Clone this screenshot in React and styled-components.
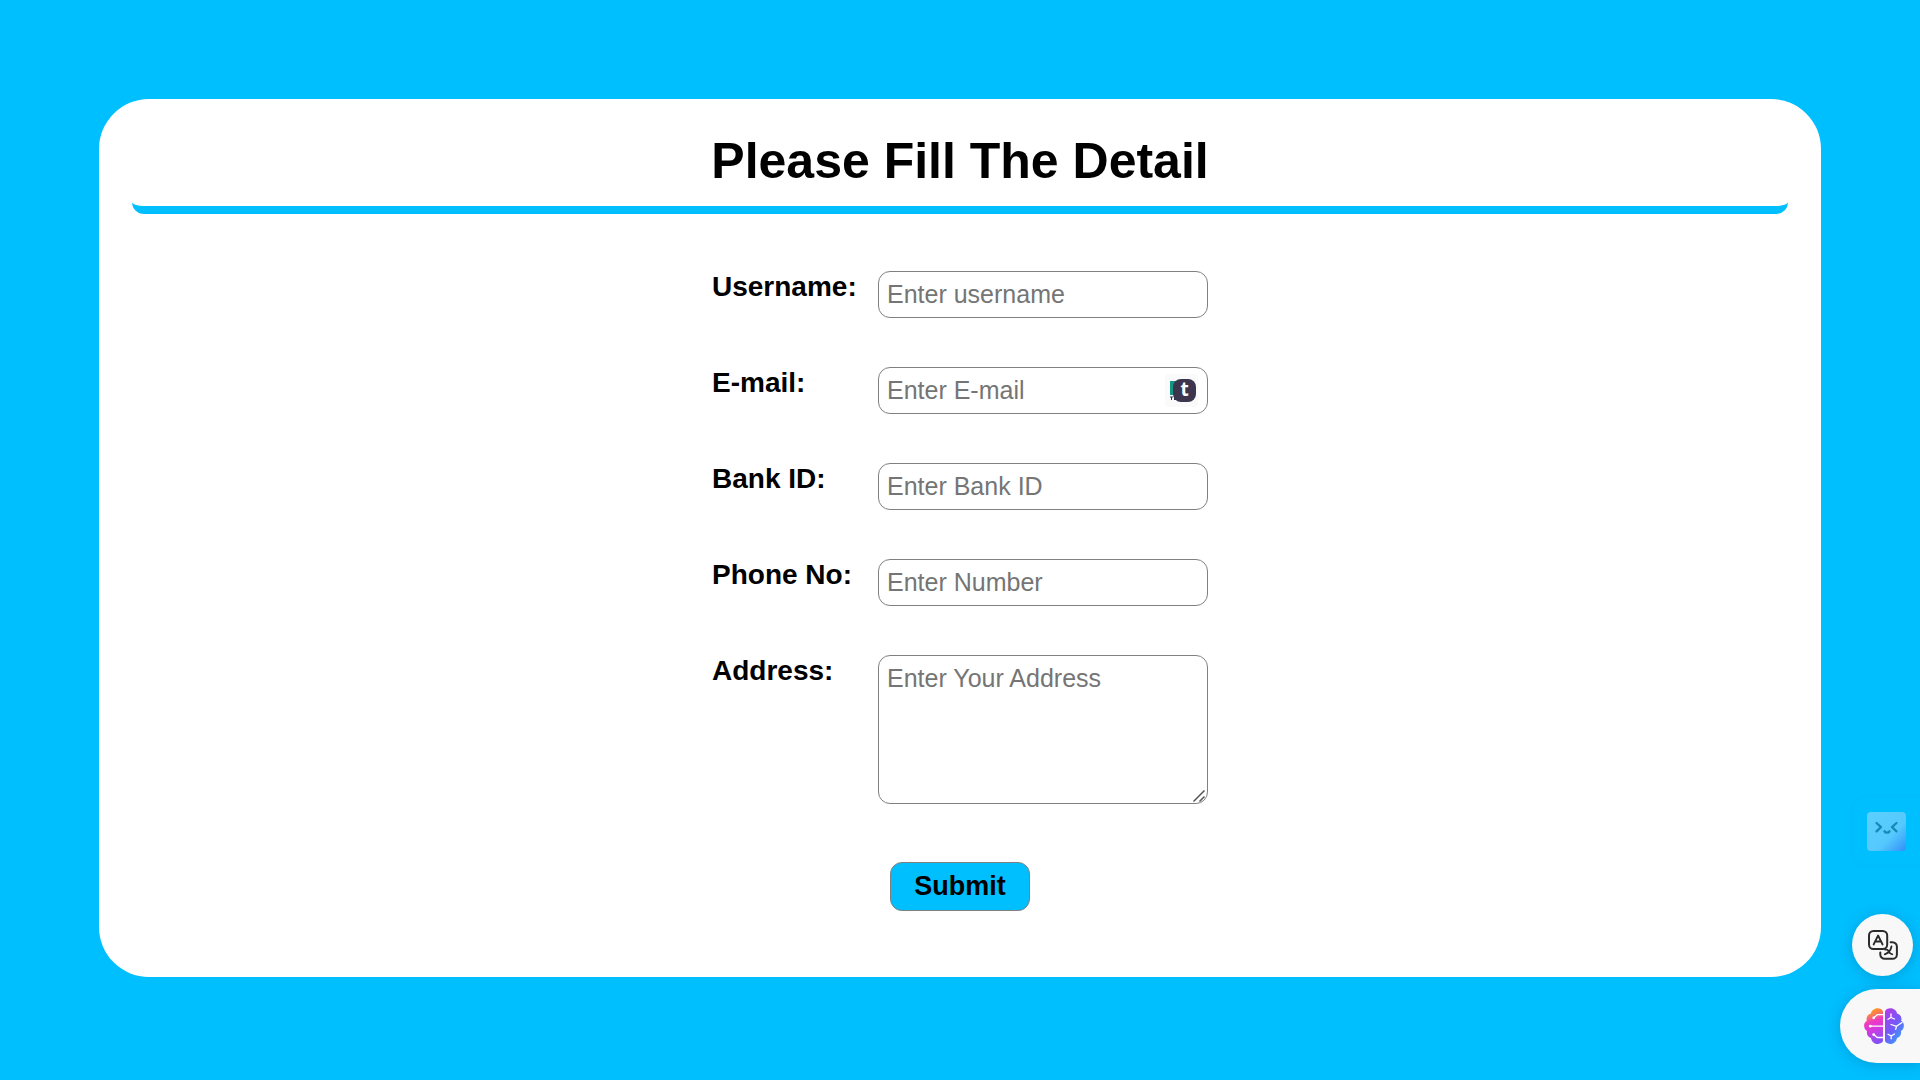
import React from "react";
import styled, { createGlobalStyle } from "styled-components";

const SKY = "#00bfff";

const GlobalStyle = createGlobalStyle`
  *, *::before, *::after { box-sizing: border-box; }
  body {
    margin: 0;
    background: ${SKY};
    color: #000;
    font-family: "Liberation Sans", Arial, sans-serif;
  }
`;

const Page = styled.main`
  min-height: 100vh;
  padding: 99px;
`;

const Card = styled.form`
  display: flex;
  flex-direction: column;
  align-items: center;
  padding: 33px 33px 66px;
  border-radius: 50px;
  background: #fff;
`;

const Title = styled.h1`
  align-self: stretch;
  margin: 0 0 57px;
  padding-bottom: 16px;
  border-bottom: 8px solid ${SKY};
  border-radius: 12px;
  font-size: 50px;
  line-height: 58px;
  text-align: center;
`;

const Fields = styled.div`
  display: grid;
  gap: 49px;
  margin-bottom: 58px;
`;

const Row = styled.div`
  display: grid;
  grid-template-columns: 166px 330px;
  align-items: start;
`;

const Label = styled.label`
  font-size: 28px;
  line-height: 31px;
  font-weight: 700;
`;

const Control = styled.div`
  position: relative;
  display: grid;
`;

const TextBox = styled.input`
  width: 100%;
  height: ${(p) => (p.$tall ? "149px" : "47px")};
  margin: 0;
  padding: 8px;
  border: 1px solid #808080;
  border-radius: 12px;
  background: #fff;
  color: #000;
  font: 25px/29px "Liberation Sans", Arial, sans-serif;
  &::placeholder { color: #757575; }
  &::-webkit-resizer { background: transparent; }
`;

const Grip = styled.svg`
  position: absolute;
  right: 3px;
  bottom: 2px;
  pointer-events: none;
`;

const Submit = styled.button`
  width: 140px;
  height: 49px;
  padding: 0;
  border: 1px solid #808080;
  border-radius: 12px;
  background: ${SKY};
  color: #000;
  font: 700 27px/31px "Liberation Sans", Arial, sans-serif;
  cursor: pointer;
`;

const Autofill = styled.span`
  position: absolute;
  top: 7px;
  right: 10px;
  width: 33px;
  height: 33px;
  border-radius: 3px;
  background: #fafafa;
`;

const AutofillBook = styled.svg`
  position: absolute;
  left: 5px;
  top: 7px;
`;

const AutofillBadge = styled.b`
  position: absolute;
  left: 8px;
  top: 5px;
  width: 23px;
  height: 23px;
  border-radius: 8px;
  background: #3d344e;
  color: #fff;
  font: 700 19px/21px "Open Sans", "Noto Sans", sans-serif;
  text-align: center;
`;

const FloatButton = styled.button`
  position: fixed;
  display: flex;
  align-items: center;
  padding: 0;
  border: 0;
  background: #f8f8f8;
  cursor: pointer;
`;

const MascotButton = styled(FloatButton)`
  right: 0;
  bottom: 216px;
  width: 67px;
  height: 66px;
  padding-left: 14px;
  border-radius: 12px 0 0 12px;
  background: transparent;
  box-shadow: 0 0 4px rgba(0, 100, 180, 0.08);
`;

const TranslateButton = styled(FloatButton)`
  right: 7px;
  bottom: 104px;
  width: 61px;
  height: 62px;
  justify-content: center;
  border-radius: 50%;
  box-shadow: 0 2px 14px rgba(0, 40, 80, 0.22);
`;

const BrainButton = styled(FloatButton)`
  right: 0;
  bottom: 17px;
  width: 80px;
  height: 74px;
  padding-left: 24px;
  border-radius: 38px 0 0 38px;
  box-shadow: 0 2px 14px rgba(0, 40, 80, 0.22);
`;

const fields = [
  { id: "username", label: "Username:", hint: "Enter username", type: "text" },
  { id: "email", label: "E-mail:", hint: "Enter E-mail", type: "email", autofill: true },
  { id: "bank", label: "Bank ID:", hint: "Enter Bank ID", type: "text" },
  { id: "phone", label: "Phone No:", hint: "Enter Number", type: "tel" },
  { id: "address", label: "Address:", hint: "Enter Your Address", tall: true },
];

function AutofillMark() {
  return (
    <Autofill aria-hidden="true">
      <AutofillBook width="7" height="20" viewBox="0 0 7 20">
        <path d="M0 0h7v14H0z" fill="#159582" />
        <path d="M0 16h3M1.5 16v3M4 16h3M4 18.5h3M4.5 16v3" stroke="#26344f" strokeWidth="1" />
      </AutofillBook>
      <AutofillBadge>t</AutofillBadge>
    </Autofill>
  );
}

function ResizeGrip() {
  return (
    <Grip width="12" height="12" viewBox="0 0 12 12" aria-hidden="true">
      <path d="M.5 11.500l11-11M6.500 11.500l5-5" stroke="#555" strokeWidth="1.500" />
    </Grip>
  );
}

function MascotIcon() {
  return (
    <svg width="39" height="39" viewBox="0 0 39 39">
      <defs>
        <linearGradient id="mascot" x1="0" y1="0" x2="1" y2="1">
          <stop offset="0" stopColor="#5dd0ff" />
          <stop offset="0.62" stopColor="#55c8fd" />
          <stop offset="0.86" stopColor="#3ea5fb" />
          <stop offset="1" stopColor="#358cf5" />
        </linearGradient>
      </defs>
      <rect width="39" height="39" rx="4" fill="url(#mascot)" />
      <path
        d="M9.500 11l4.500 4.200-4.500 4.200M29.500 11L25 15.200l4.500 4.200M17.500 19.200c.8 2 4.200 2 5 0"
        fill="none" stroke="#168ab6" strokeWidth="2.300" strokeLinecap="round" strokeLinejoin="round"
      />
    </svg>
  );
}

function TranslateIcon() {
  return (
    <svg width="30" height="30" viewBox="0 0 30 30" fill="none" stroke="#2b2b2b" strokeLinecap="round" strokeLinejoin="round">
      <rect x="1" y="1" width="18.200" height="18" rx="4.500" strokeWidth="2" />
      <path d="M5.600 14.500L10.100 5.500l4.500 9M7.300 11.500h5.700" strokeWidth="1.800" />
      <path d="M22.600 12.200H24.500a4.400 4.400 0 0 1 4.400 4.400v7.800a4.400 4.400 0 0 1-4.400 4.400h-7.800a4.400 4.400 0 0 1-4.400-4.400v-1.800" strokeWidth="2" />
      <path d="M23.500 16.500c-.8 3.800-3 6.600-6.800 7.800M17.200 19.700h1.800c1.400 0 2 4.600 5.300 4.600" strokeWidth="1.800" />
    </svg>
  );
}

function BrainIcon() {
  return (
    <svg width="40" height="36" viewBox="0 0 40 36">
      <defs>
        <linearGradient id="brainLeft" gradientUnits="userSpaceOnUse" x1="5" y1="2" x2="18" y2="34">
          <stop offset="0" stopColor="#ff9a1f" />
          <stop offset="0.160" stopColor="#fb7f4c" />
          <stop offset="0.340" stopColor="#ee3cc0" />
          <stop offset="0.550" stopColor="#d838dc" />
          <stop offset="0.800" stopColor="#a04af0" />
          <stop offset="1" stopColor="#7f50f5" />
        </linearGradient>
        <linearGradient id="brainRight" x1="0.100" y1="0" x2="0.800" y2="1">
          <stop offset="0" stopColor="#b43be9" />
          <stop offset="0.500" stopColor="#7459f8" />
          <stop offset="1" stopColor="#2fa8ff" />
        </linearGradient>
      </defs>
      <path
        d="M19 3.500C18 .5 13 -.8 9.800 1.600 8 2.500 7.200 4 7 5.600 3.500 6.200 1.900 9.500 2.800 12.700.8 14-.2 16 .2 18.400c.2 2 1.300 3.600 2.800 4.600-.6 3.500 1 6.300 4 6.900.6 3.600 3.500 6.300 7 6 2.300-.1 4.200-1.100 5-2.800z"
        fill="url(#brainLeft)"
      />
      <path
        d="M21 3.500C22 .5 27 -.8 30.200 1.600 32 2.500 32.800 4 33 5.600c3.500.6 5.100 3.900 4.200 7.100 2 1.300 3 3.300 2.600 5.700-.2 2-1.300 3.600-2.800 4.600.6 3.500-1 6.300-4 6.900-.6 3.600-3.500 6.300-7 6-2.300-.1-4.200-1.100-5-2.800z"
        fill="url(#brainRight)"
      />
      <g fill="none" stroke="#fff" strokeWidth="1.300" strokeLinecap="round" strokeLinejoin="round">
        <path d="M19.200 6.700h-6L10 9.500M19.200 18.200H6.500M19.200 29.500h-6L10 26.800" />
        <path d="M27 6v3.500l-3 1.800M27 9.500l3.500 1.500M27 16.500l5.500 1.800M38 14.500l-5.500 3.800-.8 3M24 26.200l3.200 1.800 3.300-2M27.200 28v2.800" />
      </g>
      <g fill="#fff">
        <circle cx="9.700" cy="9.800" r="1.400" />
        <circle cx="6.300" cy="18.200" r="1.400" />
        <circle cx="9.700" cy="26.600" r="1.400" />
      </g>
    </svg>
  );
}

export default function App() {
  return (
    <>
      <GlobalStyle />
      <Page>
        <Card onSubmit={(e) => e.preventDefault()}>
          <Title>Please Fill The Detail</Title>
          <Fields>
            {fields.map(({ id, label, hint, type, tall, autofill }) => (
              <Row key={id}>
                <Label htmlFor={id}>{label}</Label>
                <Control>
                  <TextBox as={tall ? "textarea" : "input"} id={id} name={id} type={type} placeholder={hint} $tall={tall} />
                  {autofill && <AutofillMark />}
                  {tall && <ResizeGrip />}
                </Control>
              </Row>
            ))}
          </Fields>
          <Submit type="submit">Submit</Submit>
        </Card>
      </Page>
      <MascotButton type="button" aria-label="Assistant"><MascotIcon /></MascotButton>
      <TranslateButton type="button" aria-label="Translate"><TranslateIcon /></TranslateButton>
      <BrainButton type="button" aria-label="Sidebar"><BrainIcon /></BrainButton>
    </>
  );
}
